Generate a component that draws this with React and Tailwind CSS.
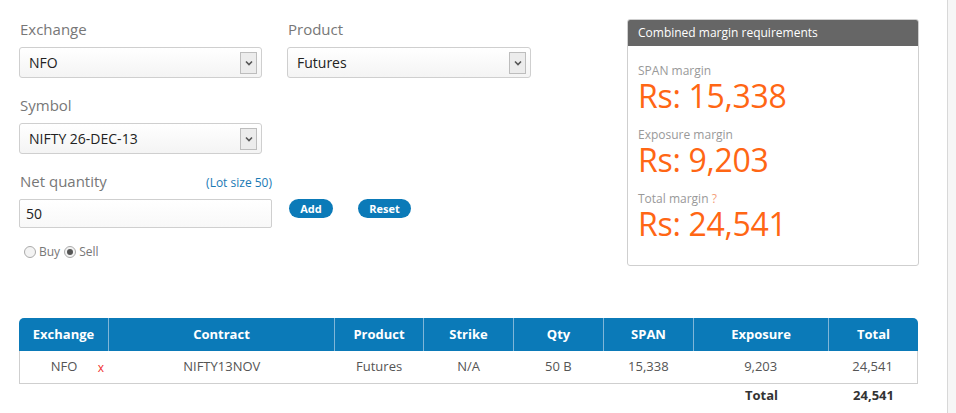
import React, { useState } from "react";

const font = { fontFamily: '"Open Sans", "Noto Sans", sans-serif' };

function Select({ value, width }) {
  return (
    <div
      className={`flex items-center justify-between h-[31px] ${width} rounded-[3px] border border-[#cfcfcf] bg-gradient-to-b from-white to-[#f4f4f4] pl-[9px] pr-[4px]`}
    >
      <span className="text-[14px] text-[#222]">{value}</span>
      <span className="flex items-center justify-center w-[17px] h-[22px] border border-[#bdbdbd] bg-[#ececec]">
        <svg width="8" height="6" viewBox="0 0 8 6">
          <path d="M1 1.5 L4 4.5 L7 1.5" fill="none" stroke="#555" strokeWidth="1.6" />
        </svg>
      </span>
    </div>
  );
}

function Radio({ checked, label }) {
  return (
    <label className="flex items-center gap-[3px] text-[12px] text-[#777]">
      <span className="flex items-center justify-center w-[12px] h-[12px] rounded-full border border-[#aaa] bg-[#f3f3f3]">
        {checked && <span className="w-[6px] h-[6px] rounded-full bg-[#555]" />}
      </span>
      {label}
    </label>
  );
}

export default function App() {
  const [qty, setQty] = useState("50");

  const cols = [
    { name: "Exchange", w: "w-[90px]" },
    { name: "Contract", w: "w-[226px]" },
    { name: "Product", w: "w-[89px]" },
    { name: "Strike", w: "w-[90px]" },
    { name: "Qty", w: "w-[90px]" },
    { name: "SPAN", w: "w-[90px]" },
    { name: "Exposure", w: "w-[135px]" },
    { name: "Total", w: "w-[89px]" },
  ];
  const row = ["NFO", "NIFTY13NOV", "Futures", "N/A", "50 B", "15,338", "9,203", "24,541"];

  return (
    <div style={font} className="flex w-[956px] h-[413px] overflow-hidden bg-[#f6f6f6]">
      <div className="w-[948px] h-full bg-white border-r border-[#d8d8d8]">
        <div className="flex pt-[19px] pl-[19px]">
          {/* form */}
          <div className="w-[608px]">
            <div className="flex gap-[25px]">
              <div>
                <div className="text-[15px] text-[#777] leading-[20px] mb-[8px] pl-[1px]">Exchange</div>
                <Select value="NFO" width="w-[243px]" />
              </div>
              <div>
                <div className="text-[15px] text-[#777] leading-[20px] mb-[8px] pl-[1px]">Product</div>
                <Select value="Futures" width="w-[244px]" />
              </div>
            </div>
            <div className="mt-[17px]">
              <div className="text-[15px] text-[#777] leading-[20px] mb-[8px] pl-[1px]">Symbol</div>
              <Select value="NIFTY 26-DEC-13" width="w-[243px]" />
            </div>
            <div className="mt-[17px] flex items-end">
              <div className="w-[253px]">
                <div className="flex justify-between items-baseline mb-[7px]">
                  <span className="text-[15px] text-[#777] leading-[20px] pl-[1px]">Net quantity</span>
                  <span className="text-[12px] text-[#1a7ab5]">(Lot size 50)</span>
                </div>
                <input
                  value={qty}
                  onChange={(e) => setQty(e.target.value)}
                  className="w-[253px] h-[29px] rounded-[2px] border border-[#cfcfcf] bg-gradient-to-b from-white to-[#f8f8f8] px-[6px] text-[14px] text-[#222] outline-none"
                />
              </div>
              <div className="flex gap-[25px] ml-[17px] mb-[10px]">
                <button className="h-[19px] w-[44px] rounded-full bg-[#0b7ab8] text-[11px] font-bold text-white leading-none">
                  Add
                </button>
                <button className="h-[19px] w-[53px] rounded-full bg-[#0b7ab8] text-[11px] font-bold text-white leading-none">
                  Reset
                </button>
              </div>
            </div>
            <div className="flex gap-[4px] mt-[15px] pl-[5px]">
              <Radio label="Buy" />
              <Radio checked label="Sell" />
            </div>
          </div>

          {/* margin card */}
          <div className="w-[292px] h-[247px] rounded-[3px] border border-[#cfcfcf] overflow-hidden">
            <div className="h-[26px] bg-[#666] px-[10px] flex items-center text-[12px] text-white">
              Combined margin requirements
            </div>
            <div className="px-[10px] pt-[18px]">
              <div className="text-[12px] text-[#999] leading-[14px]">SPAN margin</div>
              <div className="text-[32px] text-[#ff6614] leading-[44px] -my-[4px] tracking-[-0.3px]">Rs: 15,338</div>
              <div className="text-[12px] text-[#999] leading-[14px] mt-[14px]">Exposure margin</div>
              <div className="text-[32px] text-[#ff6614] leading-[44px] -my-[4px] tracking-[-0.3px]">Rs: 9,203</div>
              <div className="text-[12px] text-[#999] leading-[14px] mt-[14px]">
                Total margin <span className="text-[#f4a07a]">?</span>
              </div>
              <div className="text-[32px] text-[#ff6614] leading-[44px] -my-[4px] tracking-[-0.3px]">Rs: 24,541</div>
            </div>
          </div>
        </div>

        {/* table */}
        <div className="ml-[19px] mt-[52px] w-[899px]">
          <div className="flex h-[33px] bg-[#0b7ab8] rounded-t-[5px]">
            {cols.map((c, i) => (
              <div
                key={c.name}
                className={`${c.w} flex items-center justify-center text-[13px] font-bold text-white ${i < cols.length - 1 ? "border-r border-[#7fb6d8]" : ""}`}
              >
                {c.name}
              </div>
            ))}
          </div>
          <div className="flex h-[33px] border-x border-b border-[#cfcfcf]">
            {row.map((v, i) => (
              <div
                key={i}
                className={`${cols[i].w} relative flex items-center justify-center text-[13px] text-[#555] ${i === 0 ? "-ml-[1px]" : ""}`}
              >
                {v}
                {i === 0 && (
                  <span className="absolute right-[5px] top-[8px] text-[12px] text-[#f0322d]">x</span>
                )}
              </div>
            ))}
          </div>
          <div className="flex h-[24px] items-center text-[13px] font-bold text-[#333]">
            <div className="w-[675px]" />
            <div className="w-[135px] text-center">Total</div>
            <div className="w-[89px] text-center">24,541</div>
          </div>
        </div>
      </div>
    </div>
  );
}
